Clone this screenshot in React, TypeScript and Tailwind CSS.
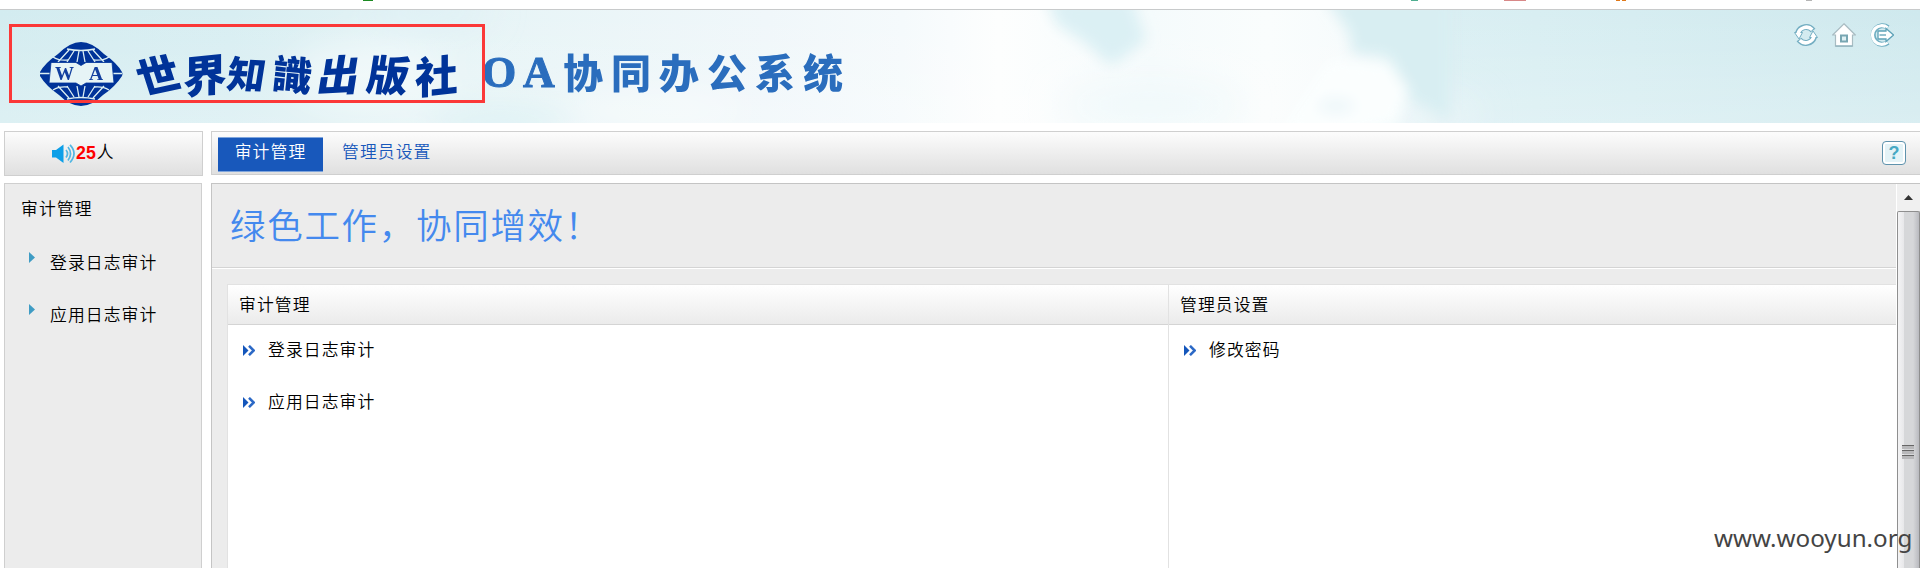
import type { ReactNode } from "react";

const CJK = "font-['Liberation_Sans','Noto_Sans_CJK_SC',sans-serif]";

function Clouds() {
  return (
    <svg className="absolute inset-0 h-full w-full" viewBox="0 0 1920 113" preserveAspectRatio="none">
      <defs>
        <linearGradient id="sky" x1="0" x2="1" y1="0" y2="0">
          <stop offset="0" stopColor="#d3ecf0" />
          <stop offset="0.12" stopColor="#d8eef2" />
          <stop offset="0.24" stopColor="#e6f4f6" />
          <stop offset="0.4" stopColor="#f0f7fa" />
          <stop offset="0.47" stopColor="#f5fafc" />
          <stop offset="0.52" stopColor="#fdfefe" />
          <stop offset="0.6" stopColor="#f5fbfc" />
          <stop offset="0.66" stopColor="#fafdfd" />
          <stop offset="0.71" stopColor="#f6fbfc" />
          <stop offset="0.75" stopColor="#daeff3" />
          <stop offset="0.85" stopColor="#d6edf1" />
          <stop offset="1" stopColor="#cfe9ee" />
        </linearGradient>
        <linearGradient id="haze" x1="0" x2="0" y1="0" y2="1">
          <stop offset="0" stopColor="#fff" stopOpacity="0" />
          <stop offset="1" stopColor="#fff" stopOpacity="0.22" />
        </linearGradient>
        <filter id="b6" x="-20%" y="-50%" width="140%" height="200%"><feGaussianBlur stdDeviation="7" /></filter>
        <filter id="b20" x="-30%" y="-100%" width="160%" height="300%"><feGaussianBlur stdDeviation="18" /></filter>
      </defs>
      <rect width="1920" height="113" fill="url(#sky)" />
      <rect width="1920" height="113" fill="url(#haze)" />
      <g filter="url(#b20)">
        <ellipse cx="370" cy="65" rx="80" ry="35" fill="#fff" opacity="0.45" />
        <ellipse cx="500" cy="115" rx="70" ry="14" fill="#d6eff2" opacity="0.8" />
        <ellipse cx="430" cy="0" rx="60" ry="14" fill="#dceff6" opacity="0.8" />
        <ellipse cx="660" cy="100" rx="90" ry="20" fill="#fff" opacity="0.4" />
        <ellipse cx="1150" cy="95" rx="90" ry="18" fill="#eef8fb" opacity="0.9" />
        <ellipse cx="1430" cy="105" rx="50" ry="20" fill="#eef7fa" opacity="0.7" />
      </g>
      <g filter="url(#b6)">
        <path d="M1046-12 L1132-12 L1146 30 L1118 52 L1108 54 L1084 32 L1056 14Z" fill="#dbf0f4" />
        <path d="M1325-12 L1450-12 L1450 110 L1412 90 L1388 46 L1352 44 L1350 24Z" fill="#d8eef2" />
        <path d="M1330 50 L1390 54 L1408 78 L1396 115 L1280 125Z" fill="#fbfefe" />
        <ellipse cx="1336" cy="96" rx="18" ry="8" fill="#eef7fa" />
      </g>
    </svg>
  );
}

function GlobeLogo() {
  return (
    <svg className="block h-[66px] w-[84px] shrink-0" viewBox="0 0 84 66">
      <path d="M1 31 Q6 22 19 13 Q31 1 42 1 Q53 1 65 13 Q78 22 83 31 Q84 33 83 35 Q76 46 64 54 Q53 65 42 65 Q31 65 20 54 Q7 45 1 35Z" fill="#003399" />
      <g fill="none" stroke="#dceff3" strokeWidth="1.3">
        <path d="M28 8 Q42 11 56 8" />
        <path d="M28 58 Q42 55 56 58" />
        <path d="M30 9 L19 21 M35 10 L28 21 M40 10 L38 21 M44 10 L46 21 M49 10 L56 21 M54 9 L65 21" />
        <path d="M30 57 L19 45 M35 56 L28 45 M40 56 L38 45 M44 56 L46 45 M49 56 L56 45 M54 57 L65 45" />
        <path d="M1 32.500H12 M74 32.500H83" />
        <path d="M14 16 Q20 20 29 19 M70 16 Q64 20 55 19 M14 49 Q20 45 29 46 M70 49 Q64 45 55 46" />
      </g>
      <path d="M12 21.500 H37 L42 24.500 L47 21.500 H73 L75 42 H47 L42 45 L37 42 H10Z" fill="#e6f4f6" stroke="#003399" strokeWidth=".8" />
      <text x="16" y="38.500" fontSize="19" fontFamily="Liberation Serif" fontWeight="700" fill="#123f9f">W</text>
      <text x="50" y="38.500" fontSize="19.500" fontFamily="Liberation Serif" fontWeight="700" fill="#123f9f">A</text>
    </svg>
  );
}

function HeaderIcons() {
  return (
    <div className="absolute top-[13px] right-[26px] flex gap-[14px]">
      <svg className="size-6" viewBox="0 0 24 24">
        <g fill="none" stroke="#74aec2" strokeWidth="6">
          <path d="M4 10 A8.500 8.500 0 0 1 19 7.500 M20 14 A8.500 8.500 0 0 1 5 16.500" />
        </g>
        <path d="M.5 9.500H8.500L5 16Z M23.500 14.500H15.500L19 8Z" fill="#fff" stroke="#74aec2" strokeWidth="1" />
        <g fill="none" stroke="#fff" strokeWidth="3.600">
          <path d="M4 11 A8.500 8.500 0 0 1 18.300 6.700 M20 13 A8.500 8.500 0 0 1 5.700 17.300" />
        </g>
      </svg>
      <svg className="size-6" viewBox="0 0 24 24">
        <path d="M12 .8 L23.300 12 H20.500 V23.200 H3.500 V12 H.7Z" fill="#fff" stroke="#a9bcc2" strokeWidth="1.200" />
        <path d="M3.500 23H20.500" stroke="#7fabb8" />
        <rect x="9" y="12.500" width="6" height="6" fill="#dff0f3" stroke="#78a6b2" strokeWidth="2" />
      </svg>
      <svg className="size-6" viewBox="0 0 24 24">
        <path d="M18 4.500 A9.300 9.300 0 1 0 18 19.500" fill="none" stroke="#6faec2" strokeWidth="5" />
        <path d="M17.500 4.700 A9.300 9.300 0 1 0 17.500 19.300" fill="none" stroke="#fff" strokeWidth="3.200" />
        <path d="M8 8 H16 V5.500 L23.500 12 L16 18.500 V16 H8Z" fill="#fff" stroke="#5fa2b8" strokeWidth="1.300" />
        <path d="M9.500 12H16" stroke="#6aa8bc" strokeWidth="1.400" />
      </svg>
    </div>
  );
}

const PUBLISHER: { char: string; cls: string }[] = [
  { char: "世", cls: "w-[50px] text-[42px] -rotate-12 skew-x-6" },
  { char: "界", cls: "w-[42px] text-[44px] -rotate-6 -skew-x-6" },
  { char: "知", cls: "w-[45px] text-[38px] rotate-3 -skew-x-6" },
  { char: "識", cls: "w-[46px] text-[40px] rotate-6" },
  { char: "出", cls: "w-[48px] text-[42px] -skew-x-12 -rotate-3" },
  { char: "版", cls: "w-[50px] text-[42px] rotate-3 -skew-x-6" },
  { char: "社", cls: "w-[46px] text-[43px] -rotate-6 -skew-x-6" },
];

function Banner() {
  return (
    <header className="relative flex h-[114px] shrink-0 overflow-hidden border-t border-[#c8cacb]">
      <Clouds />
      <div className="relative flex pt-[31px] pl-[39px]">
        <GlobeLogo />
        <div className="mt-[3px] ml-[10px] flex h-[58px] w-[327px] items-center font-['Noto_Sans_CJK_SC',sans-serif] font-black text-[#003399]">
          {PUBLISHER.map((p) => (
            <span key={p.char} className={`block text-center leading-none ${p.cls}`}>{p.char}</span>
          ))}
        </div>
        <div className="ml-[22px] flex h-[64px] items-center text-[#2a6dbd]">
          <span className="w-[41px] font-['Liberation_Serif',serif] text-[44px] leading-none font-bold [-webkit-text-stroke:1px_#2a6dbd]">O</span>
          <span className="w-[40px] font-['Liberation_Serif',serif] text-[44px] leading-none font-bold [-webkit-text-stroke:1px_#2a6dbd]">A</span>
          <span className="pb-[4px] font-['Noto_Sans_CJK_SC',sans-serif] text-[40px] leading-none font-black tracking-[8px] whitespace-nowrap">协同办公系统</span>
        </div>
      </div>
      <HeaderIcons />
    </header>
  );
}

function SpeakerIcon() {
  return (
    <svg className="block h-5 w-6" viewBox="0 0 24 20">
      <path d="M0 6H4L11.500 .5V19L4 13.500H0Z" fill="#0d9fe8" />
      <g fill="none" stroke="#52b7e3" strokeWidth="1.700">
        <path d="M14 6 Q17 9.500 14 13.500" />
        <path d="M16 3 Q21 9.500 16 16.500" />
        <path d="M18 .8 Q26 9.500 18 18.500" />
      </g>
    </svg>
  );
}

function SideItem({ children }: { children: ReactNode }) {
  return (
    <li className="flex h-[52px] items-start">
      <svg className="mr-[15px] block h-[11px] w-[6px]" viewBox="0 0 6 11"><path d="M0 0L6 5.500L0 11Z" fill="#3f9cc4" /></svg>
      <span className="leading-[24px]">{children}</span>
    </li>
  );
}

function PanelItem({ children }: { children: ReactNode }) {
  return (
    <li className="flex h-[52px] items-center pl-[15px]">
      <svg className="mr-[13px] mb-[2px] block h-[11px] w-[12px]" viewBox="0 0 12 11">
        <path d="M0 0L5.500 5.500L0 11Z" fill="#1456bb" />
        <path d="M6 .8L10.700 5.500L6 10.200" fill="none" stroke="#2c69c6" strokeWidth="2.500" />
      </svg>
      <span className="pt-[1px]">{children}</span>
    </li>
  );
}

function Panel({ title, items, className }: { title: string; items: string[]; className: string }) {
  return (
    <section className={`border-t border-l border-[#e2e2e2] bg-white ${className}`}>
      <h2 className="flex h-[40px] items-center border-b border-[#d4d4d4] bg-linear-to-b from-white to-[#ebebeb] pt-[3px] pl-[11px]">{title}</h2>
      <ul>
        {items.map((t) => <PanelItem key={t}>{t}</PanelItem>)}
      </ul>
    </section>
  );
}

function ScrollBar() {
  return (
    <div className="flex w-[24px] shrink-0 flex-col border-l border-white bg-[#f0f0f0]">
      <div className="flex h-[27px] items-center justify-center pr-px">
        <svg className="h-[5px] w-[9px]" viewBox="0 0 9 5"><path d="M0 5L4.500 0L9 5Z" fill="#333" /></svg>
      </div>
      <div className="flex flex-1 flex-col items-start rounded-t-[2px] border-t border-r border-l border-[#8f8f8f] bg-[linear-gradient(to_right,#f4f4f5_0%,#e8e8ea_27%,#d6d7d9_30%,#d6d7d9_72%,#b9babf_100%)] pt-[233px] pl-[4px]">
        <div className="flex w-[12px] flex-col gap-[1px]">
          <i className="h-1 border-t border-[#666] bg-[#b8b8ba]" />
          <i className="h-1 border-t border-[#666] bg-[#b8b8ba]" />
          <i className="h-1 border-t border-[#666] bg-[#b8b8ba]" />
        </div>
      </div>
    </div>
  );
}

export default function App() {
  return (
    <div className={`relative flex h-[568px] w-[1920px] flex-col overflow-hidden bg-white text-[16.800px] leading-none font-[350] tracking-[1.100px] text-black ${CJK}`}>
      <div className="relative h-[9px] shrink-0">
        <i className="absolute top-0 left-[363px] h-px w-[10px] bg-[#1c8a22]" />
        <i className="absolute top-0 left-[1411px] h-px w-[7px] bg-[#4fae90]" />
        <i className="absolute top-0 left-[1504px] h-px w-[22px] bg-[#d88888]" />
        <i className="absolute top-0 left-[1616px] h-px w-[4px] bg-[#e07818]" />
        <i className="absolute top-0 left-[1622px] h-px w-[4px] bg-[#e07818]" />
        <i className="absolute top-0 left-[1806px] h-px w-[6px] bg-[#b5b5b5]" />
      </div>
      <Banner />

      <div className="mt-[8px] flex h-[45px] shrink-0 items-start pl-[4px]">
        <div className="flex h-[45px] w-[199px] items-center border border-[#cfcfcf] bg-linear-to-b from-[#fcfcfc] to-[#e0e0e0] pl-[47px]">
          <SpeakerIcon />
          <b className="text-[17.800px] tracking-normal text-[#ff0000]">25</b>
          <span className="pl-px">人</span>
        </div>
        <nav className="ml-[8px] flex h-[44px] flex-1 items-start border-y border-l border-[#cfcfcf] bg-linear-to-b from-[#fcfcfc] to-[#e0e0e0] pt-[5px] pl-[6px] text-[#1858bb]">
          <a className="flex h-[35px] w-[105px] justify-center border-y border-[#7fa5dc] bg-[#1858bb] pt-[7px] text-white">审计管理</a>
          <a className="ml-[19px] pt-[8px]">管理员设置</a>
          <span className="mt-[4px] mr-[14px] ml-auto flex size-6 items-center justify-center rounded-[4px] border border-[#5f93ad] bg-[#e4f3f7] text-[18px] font-bold tracking-normal text-[#46a9c4] shadow-[inset_0_0_0_2px_#fff]">?</span>
        </nav>
      </div>

      <div className="mt-[7px] flex min-h-0 flex-1 pl-[4px]">
        <aside className="w-[198px] shrink-0 border-x border-t border-[#cfcfcf] bg-[#ececec] pt-[18px]">
          <h3 className="pl-[16px]">审计管理</h3>
          <ul className="pt-[33px] pl-[24px]">
            <SideItem>登录日志审计</SideItem>
            <SideItem>应用日志审计</SideItem>
          </ul>
        </aside>
        <main className="ml-[9px] flex min-w-0 flex-1 border-t border-l border-[#c4c4c4] bg-[#ececec]">
          <div className="flex min-w-0 flex-1 flex-col">
            <div className="flex h-[84px] shrink-0 items-center border-b border-[#d4d4d4] pb-[4px] pl-[18px] font-['Noto_Sans_CJK_SC',sans-serif] text-[35.500px] tracking-[1.700px] text-[#4489ee]">绿色工作，协同增效！</div>
            <div className="flex flex-1 border-t border-white pt-[15px] pl-[15px]">
              <Panel title="审计管理" items={["登录日志审计", "应用日志审计"]} className="w-[941px] shrink-0" />
              <Panel title="管理员设置" items={["修改密码"]} className="flex-1" />
            </div>
          </div>
          <ScrollBar />
        </main>
      </div>

      <div className="absolute top-[24px] left-[9px] h-[79px] w-[476px] border-3 border-[#fb3838]" />
      <div className="absolute top-[524px] left-[1714px] font-['Noto_Sans',sans-serif] text-[24.200px] leading-[28px] font-normal tracking-normal text-[#444]">www.wooyun.org</div>
    </div>
  );
}
